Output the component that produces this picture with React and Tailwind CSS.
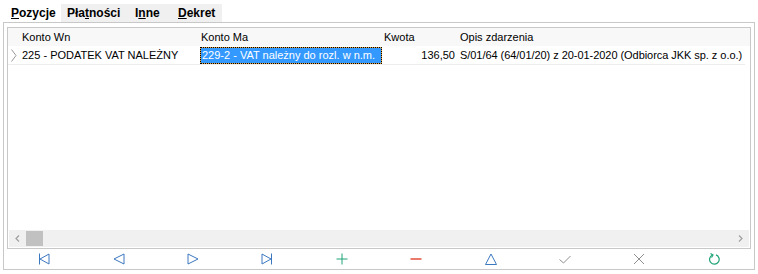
import React from 'react';

const font = { fontFamily: '"Liberation Sans", Arial, sans-serif' };

const Icon = ({ children, color }) => (
    <svg width="12" height="12" viewBox="0 0 12 12" fill="none" stroke={color} strokeWidth="1" className="block">
        {children}
    </svg>
);

const BLUE = '#3a78c0';
const GREEN = '#1fa476';
const RED = '#e0321c';
const GRAY = '#8f8f8f';

const tools = [
    <Icon color={BLUE}><path d="M1.5 0.5 V11.5" /><path d="M11 1 L2 6 L11 11 Z" /></Icon>,
    <Icon color={BLUE}><path d="M11 1 L1 6 L11 11 Z" /></Icon>,
    <Icon color={BLUE}><path d="M1 1 L11 6 L1 11 Z" /></Icon>,
    <Icon color={BLUE}><path d="M1 1 L10 6 L1 11 Z" /><path d="M10.5 0.5 V11.5" /></Icon>,
    <Icon color={GREEN}><path d="M6 0.5 V11.5 M0.5 6 H11.5" /></Icon>,
    <Icon color={RED}><path d="M0.5 6 H11.5" strokeWidth="1.3" /></Icon>,
    <Icon color={BLUE}><path d="M6 1 L11.5 11.5 L0.5 11.5 Z" /></Icon>,
    <Icon color={GRAY}><path d="M0.5 6.5 L4.5 10 L11.5 3" /></Icon>,
    <Icon color={GRAY}><path d="M1 1 L11 11 M11 1 L1 11" /></Icon>,
    <Icon color={GREEN}><path d="M4.5 2 A4.8 4.8 0 1 0 8 1.9" strokeWidth="1.2" /><path d="M2.5 0.5 L5 2 L3.5 4.5" strokeWidth="1.2" /></Icon>,
];

const App = () => {
    return (
        <div className="w-[758px] h-[274px] bg-white pt-[4px] overflow-hidden" style={font}>
            <div className="flex h-[18px] ml-[5px]">
                <div className="flex items-center pl-[6px] w-[56px] bg-white text-[12px] font-bold">
                    <span className="underline">P</span>ozycje
                </div>
                <div className="flex bg-[#f0f0f0] w-[161px] text-[12px] font-bold">
                    <div className="flex items-center pl-[6px] w-[67px]">Pła<span className="underline">t</span>ności</div>
                    <div className="flex items-center pl-[7px] w-[43px]">I<span className="underline">n</span>ne</div>
                    <div className="flex items-center pl-[7px]"><span className="underline">D</span>ekret</div>
                </div>
            </div>

            <div className="mx-[3px] h-[248px] border border-[#c8c8c8] pt-[4px] px-[3px] flex flex-col">
                <div className="h-[222px] border border-[#c8c8c8] flex flex-col text-[11px] text-black">
                    <div className="flex h-[18px] items-center bg-[#f8f8f8]">
                        <div className="w-[10px]" />
                        <div className="w-[182px] pl-[4px]">Konto Wn</div>
                        <div className="w-[182px] pl-[1px]">Konto Ma</div>
                        <div className="w-[76px] pl-[2px]">Kwota</div>
                        <div className="flex-1 pl-[2px]">Opis zdarzenia</div>
                    </div>
                    <div className="flex h-[19px] items-center border-b border-[#ececec] mr-[5px]">
                        <div className="w-[10px] flex justify-center pl-[2px]">
                            <svg width="6" height="13" viewBox="0 0 6 13" fill="none" stroke="#9a9a9a" strokeWidth="1">
                                <path d="M0.5 0.5 L5 6.5 L0.5 12.5" />
                            </svg>
                        </div>
                        <div className="w-[182px] pl-[4px] whitespace-nowrap">225 - PODATEK VAT NALEŻNY</div>
                        <div className="w-[182px] h-[17px] bg-[#e7a13c]">
                            <div className="h-full border border-dotted border-black bg-[#3399ff] bg-clip-padding text-white pl-[1px] flex items-center whitespace-nowrap">
                                229-2 - VAT należny do rozl. w n.m.
                            </div>
                        </div>
                        <div className="w-[76px] text-right pr-[3px]">136,50</div>
                        <div className="flex-1 pl-[2px] whitespace-nowrap tracking-[-0.05px]">S/01/64 (64/01/20) z 20-01-2020 (Odbiorca JKK sp. z o.o.)</div>
                    </div>
                    <div className="flex-1" />
                    <div className="h-[17px] mx-[1px] mb-[1px] bg-[#f0f0f0] flex items-center">
                        <div className="w-[17px] flex justify-center">
                            <svg width="5" height="7" viewBox="0 0 5 7" fill="none" stroke="#a0a0a0" strokeWidth="1.2">
                                <path d="M4 0.5 L1 3.5 L4 6.5" />
                            </svg>
                        </div>
                        <div className="w-[17px] h-[15px] bg-[#c1c1c1]" />
                        <div className="flex-1" />
                        <div className="w-[17px] flex justify-center">
                            <svg width="5" height="7" viewBox="0 0 5 7" fill="none" stroke="#a0a0a0" strokeWidth="1.2">
                                <path d="M1 0.5 L4 3.5 L1 6.5" />
                            </svg>
                        </div>
                    </div>
                </div>
                <div className="flex h-[20px] items-center">
                    {tools.map((t, i) => (
                        <div key={i} className="flex-1 flex justify-center items-center">
                            {t}
                        </div>
                    ))}
                </div>
            </div>
        </div>
    );
};

export default App;
